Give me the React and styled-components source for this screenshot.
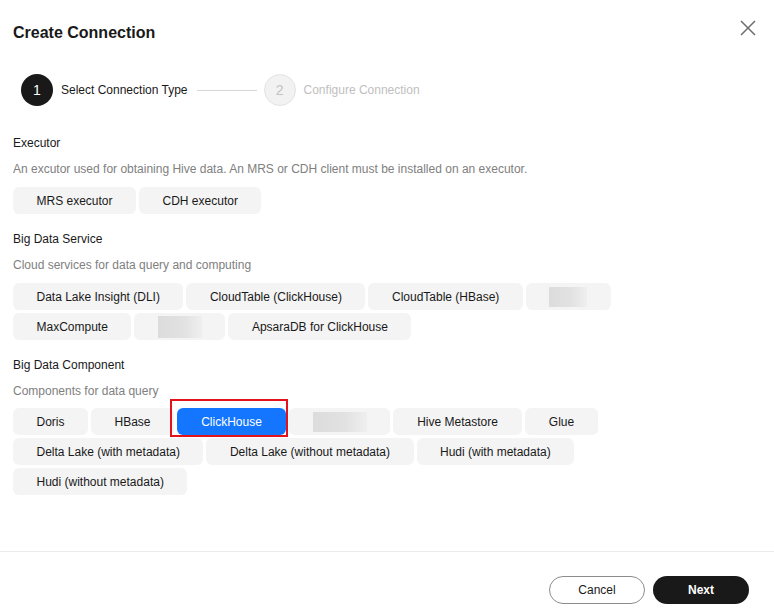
import styled, { createGlobalStyle } from "styled-components"

const GlobalStyle = createGlobalStyle`
  html, body {
    margin: 0;
    padding: 0;
    background: #fff;
  }
  body {
    font-family: "Liberation Sans", Arial, sans-serif;
    color: #191919;
  }
`

const Dialog = styled.div`
  width: 774px;
  height: 615px;
  display: flex;
  flex-direction: column;
  background: #fff;
  box-sizing: border-box;
`
const Header = styled.div`
  display: flex;
  justify-content: space-between;
  align-items: flex-start;
  padding: 21px 17px 0 13px;
`
const Title = styled.div`
  font-size: 16px;
  font-weight: bold;
  line-height: 24px;
`
const CloseButton = styled.button`
  border: none;
  background: none;
  padding: 0;
  width: 18px;
  height: 18px;
  margin-top: -2px;
  cursor: pointer;
  color: #6e6e6e;
`
const Body = styled.div`
  flex: 1;
  padding: 0 13px;
`
const Steps = styled.div`
  display: flex;
  align-items: center;
  margin: 29px 0 0 8px;
`
const StepCircle = styled.div`
  width: 32px;
  height: 32px;
  border-radius: 50%;
  box-sizing: border-box;
  display: flex;
  align-items: center;
  justify-content: center;
  font-size: 14px;
  background: ${p => (p.active ? "#191919" : "#f2f2f2")};
  color: ${p => (p.active ? "#fff" : "#c2c2c2")};
  border: ${p => (p.active ? "none" : "1px solid #e3e3e3")};
`
const StepLabel = styled.div`
  font-size: 12px;
  margin-left: 8px;
  color: ${p => (p.active ? "#191919" : "#c0c0c0")};
`
const StepLine = styled.div`
  width: 60px;
  height: 1px;
  background: #d6d6d6;
  margin: 0 7px 0 9px;
`
const Section = styled.div`
  margin-top: ${p => p.gap}px;
`
const Label = styled.div`
  font-size: 12px;
  line-height: 18px;
  color: #191919;
`
const Desc = styled.div`
  font-size: 12px;
  line-height: 18px;
  color: #808080;
  margin-top: 8px;
`
const ChipWrap = styled.div`
  display: flex;
  flex-wrap: wrap;
  gap: 3px;
  margin-top: ${p => p.top}px;
  max-width: 610px;
`
const Chip = styled.div`
  position: relative;
  height: 27px;
  box-sizing: border-box;
  display: flex;
  align-items: center;
  justify-content: center;
  padding: 0 23.5px;
  border-radius: 6px;
  font-size: 12px;
  white-space: nowrap;
  background: ${p => (p.selected ? "#1476ff" : "#f4f4f4")};
  color: ${p => (p.selected ? "#fff" : "#191919")};
  width: ${p => (p.w ? p.w + "px" : "auto")};
  ${p =>
    p.selected &&
    `
    &::after {
      content: "";
      position: absolute;
      left: -7px;
      right: -2px;
      top: -9px;
      bottom: -2px;
      border: 2px solid #e3131d;
    }
  `}
`
const Blur = styled.div`
  width: ${p => p.w}px;
  height: ${p => p.h}px;
  background: linear-gradient(90deg, #dcdcdc 0%, #e2e2e2 60%, #efefef 100%);
  filter: blur(0.6px);
`
const Footer = styled.div`
  border-top: 1px solid #ebebeb;
  display: flex;
  justify-content: flex-end;
  gap: 8px;
  padding: 24px 25px 11px 0;
`
const Button = styled.button`
  width: 96px;
  height: 28px;
  border-radius: 14px;
  font-family: "Liberation Sans", Arial, sans-serif;
  font-size: 12px;
  cursor: pointer;
  box-sizing: border-box;
  border: ${p => (p.primary ? "none" : "1px solid #8c8c8c")};
  background: ${p => (p.primary ? "#191919" : "#fff")};
  color: ${p => (p.primary ? "#fff" : "#191919")};
  font-weight: ${p => (p.primary ? "bold" : "normal")};
`

const sections = [
  {
    label: "Executor",
    desc: "An excutor used for obtaining Hive data. An MRS or CDH client must be installed on an executor.",
    gap: 28,
    chipsTop: 9,
    chips: [{ text: "MRS executor" }, { text: "CDH executor" }],
  },
  {
    label: "Big Data Service",
    desc: "Cloud services for data query and computing",
    gap: 16,
    chipsTop: 9,
    chips: [
      { text: "Data Lake Insight (DLI)" },
      { text: "CloudTable (ClickHouse)" },
      { text: "CloudTable (HBase)" },
      { blur: [47, 20], w: 85 },
      { text: "MaxCompute" },
      { blur: [57, 22], w: 91 },
      { text: "ApsaraDB for ClickHouse" },
    ],
  },
  {
    label: "Big Data Component",
    desc: "Components for data query",
    gap: 16,
    chipsTop: 8,
    chips: [
      { text: "Doris" },
      { text: "HBase" },
      { text: "ClickHouse", selected: true, w: 109 },
      { blur: [80, 20], w: 101 },
      { text: "Hive Metastore", w: 129 },
      { text: "Glue", w: 73 },
      { text: "Delta Lake (with metadata)" },
      { text: "Delta Lake (without metadata)" },
      { text: "Hudi (with metadata)" },
      { text: "Hudi (without metadata)" },
    ],
  },
]

export default function App() {
  return (
    <Dialog>
      <GlobalStyle />
      <Header>
        <Title>Create Connection</Title>
        <CloseButton aria-label="Close">
          <svg width="18" height="18" viewBox="0 0 18 18">
            <path d="M2 2 L16 16 M16 2 L2 16" stroke="currentColor" strokeWidth="1.5" fill="none" />
          </svg>
        </CloseButton>
      </Header>
      <Body>
        <Steps>
          <StepCircle active>1</StepCircle>
          <StepLabel active>Select Connection Type</StepLabel>
          <StepLine />
          <StepCircle>2</StepCircle>
          <StepLabel>Configure Connection</StepLabel>
        </Steps>
        {sections.map(section => (
          <Section key={section.label} gap={section.gap}>
            <Label>{section.label}</Label>
            <Desc>{section.desc}</Desc>
            <ChipWrap top={section.chipsTop}>
              {section.chips.map((chip, i) => (
                <Chip key={i} selected={chip.selected} w={chip.w}>
                  {chip.blur ? <Blur w={chip.blur[0]} h={chip.blur[1]} /> : chip.text}
                </Chip>
              ))}
            </ChipWrap>
          </Section>
        ))}
      </Body>
      <Footer>
        <Button>Cancel</Button>
        <Button primary>Next</Button>
      </Footer>
    </Dialog>
  )
}
